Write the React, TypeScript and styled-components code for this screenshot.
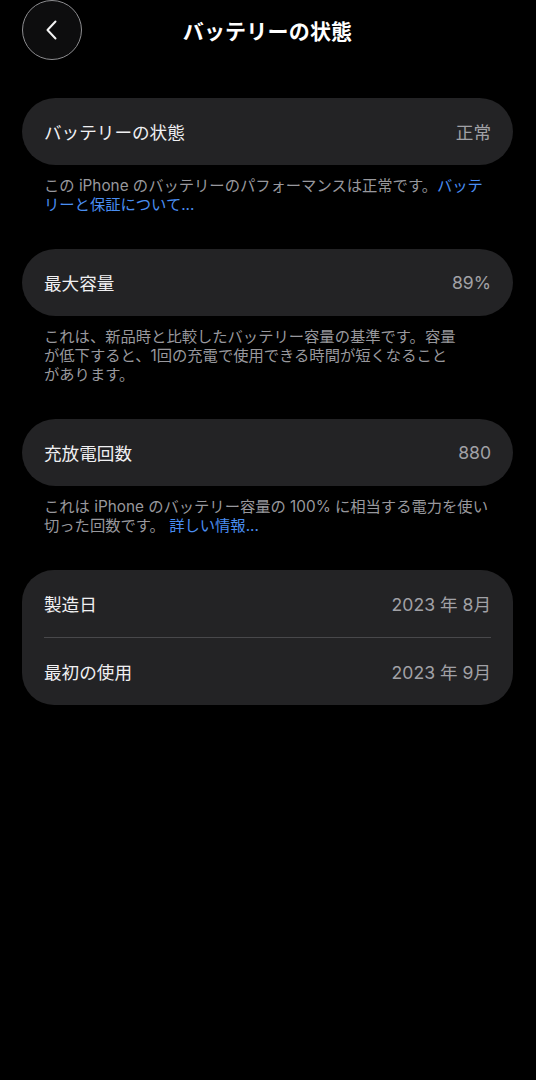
import styled, { createGlobalStyle } from 'styled-components';

const GlobalStyle = createGlobalStyle`
  html, body {
    margin: 0;
    padding: 0;
    background: #000;
  }
  body {
    font-family: Inter, "Noto Sans CJK JP", sans-serif;
    color: #f2f2f4;
    -webkit-font-smoothing: antialiased;
  }
`;

const Screen = styled.div`
  width: 536px;
  min-height: 1080px;
  background: #000;
  box-sizing: border-box;
  padding: 0 23px 0 22px;
`;

const Header = styled.header`
  position: relative;
  height: 60px;
  display: flex;
  align-items: center;
  justify-content: center;
  margin-bottom: 38px;
`;

const BackButton = styled.button`
  position: absolute;
  left: 0;
  top: 0;
  width: 60px;
  height: 60px;
  border-radius: 50%;
  border: 1px solid #8d8d90;
  background: #0d0d0e;
  display: flex;
  align-items: center;
  justify-content: center;
  padding: 0;
  cursor: pointer;
`;

const Title = styled.h1`
  margin: 0;
  font-size: 21px;
  font-weight: 700;
  color: #fff;
  letter-spacing: 0.2px;
`;

const Card = styled.section<{ $rounded?: boolean }>`
  background: #232325;
  border-radius: ${({ $rounded }) => ($rounded ? '32px' : '34px')};
  padding: 0 22px;
`;

const Row = styled.div<{ $divider?: boolean }>`
  height: 67px;
  display: flex;
  align-items: center;
  justify-content: space-between;
  border-bottom: ${({ $divider }) => ($divider ? '1px solid #48484b' : 'none')};
`;

const Label = styled.span`
  font-size: 17.6px;
  color: #f0f0f2;
`;

const Value = styled.span`
  font-size: 17.6px;
  color: #a1a1a6;
`;

const Note = styled.p`
  margin: 11px 22px 35px;
  font-size: 15.3px;
  line-height: 19px;
  color: #98989d;
`;

const Link = styled.a`
  color: #4a8ef2;
  text-decoration: none;
`;

export default function App() {
  return (
    <>
      <GlobalStyle />
      <Screen>
        <Header>
          <BackButton aria-label="戻る">
            <svg width="14" height="22" viewBox="0 0 14 22" fill="none">
              <polyline
                points="10.5,2.5 2.5,11 10.5,19.5"
                stroke="#f4f4f4"
                strokeWidth="2"
                strokeLinecap="round"
                strokeLinejoin="round"
              />
            </svg>
          </BackButton>
          <Title>バッテリーの状態</Title>
        </Header>

        <Card>
          <Row>
            <Label>バッテリーの状態</Label>
            <Value>正常</Value>
          </Row>
        </Card>
        <Note>
          この iPhone のバッテリーのパフォーマンスは正常です。<Link href="#">バッテ
          <br />
          リーと保証について...</Link>
        </Note>

        <Card>
          <Row>
            <Label>最大容量</Label>
            <Value>89%</Value>
          </Row>
        </Card>
        <Note>
          これは、新品時と比較したバッテリー容量の基準です。容量
          <br />
          が低下すると、1回の充電で使用できる時間が短くなること
          <br />
          があります。
        </Note>

        <Card>
          <Row>
            <Label>充放電回数</Label>
            <Value>880</Value>
          </Row>
        </Card>
        <Note>
          これは iPhone のバッテリー容量の 100% に相当する電力を使い
          <br />
          切った回数です。 <Link href="#">詳しい情報...</Link>
        </Note>

        <Card $rounded>
          <Row $divider>
            <Label>製造日</Label>
            <Value>2023 年 8月</Value>
          </Row>
          <Row>
            <Label>最初の使用</Label>
            <Value>2023 年 9月</Value>
          </Row>
        </Card>
      </Screen>
    </>
  );
}
